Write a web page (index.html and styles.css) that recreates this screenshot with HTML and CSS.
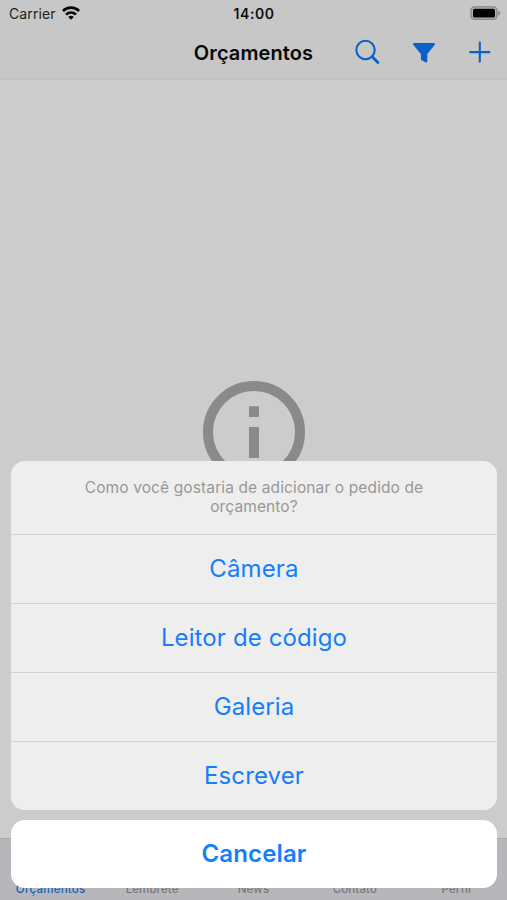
FILE: index.html
```
<!DOCTYPE html>
<html lang="pt-BR">
<head>
<meta charset="utf-8">
<title>Orçamentos</title>
<link rel="stylesheet" href="styles.css">
</head>
<body>
<div class="screen">
  <header class="top">
    <div class="status">
      <div class="carrier"><span>Carrier</span>
        <svg class="wifi" width="18" height="14" viewBox="0 0 18 14"><g fill="none" stroke="#080808" stroke-width="2.700"><path d="M.9 5C5.400 .5 12.600 .5 17.100 5"/><path d="M4 8.600C6.800 5.800 11.200 5.800 14 8.600"/></g><path fill="#080808" d="M6.200 10.900Q9 8.600 11.800 10.900L9 13.800Z"/></svg>
      </div>
      <time class="clock">14:00</time>
      <svg class="battery" width="31" height="14" viewBox="0 0 31 14"><rect x="1" y=".8" width="26" height="12.600" rx="3.600" fill="#b4b4b4" stroke="#858585" stroke-width="1.300"/><rect x="3" y="2.700" width="22" height="8.800" rx="1.600" fill="#000"/><path fill="#858585" d="M28.300 4.700Q30.300 5.500 30.300 7.100T28.300 9.500Z"/></svg>
    </div>
    <div class="nav">
      <h1 class="title">Orçamentos</h1>
      <div class="actions">
        <svg width="26" height="26" viewBox="0 0 26 26" fill="none" stroke="#0961c9" stroke-linecap="round"><circle cx="10.500" cy="11" r="9.200" stroke-width="2.100"/><path d="M17.200 17.700L22.900 23.500" stroke-width="2.800"/></svg>
        <svg width="26" height="26" viewBox="0 0 26 26"><path fill="#0961c9" d="M2.900 3.900H22.900Q24.500 4 24 5.600L16.300 15V22.200Q16.100 23.900 14.400 23.300L10.600 21.200Q9.900 20.700 9.900 19.800V15L2 5.600Q1.400 4.200 2.900 3.900Z"/></svg>
        <svg width="26" height="26" viewBox="0 0 26 26" stroke="#0961c9" stroke-width="2.100" stroke-linecap="round"><path d="M12.800 3.500V22.700M3.200 13.100H22.400"/></svg>
      </div>
    </div>
  </header>
  <main class="content">
    <svg class="info" width="104" height="104" viewBox="0 0 104 104"><circle cx="52" cy="52" r="46" fill="none" stroke="#8a8a8a" stroke-width="10"/><path fill="#8a8a8a" d="M47 26.300H57V37H47ZM47 47H57V78H47Z"/></svg>
  </main>
  <nav class="tabs">
    <span class="tab active">Orçamentos</span><span class="tab">Lembrete</span><span class="tab">News</span><span class="tab">Contato</span><span class="tab">Perfil</span>
  </nav>
  <div class="overlay">
    <section class="sheet">
      <p class="prompt">Como você gostaria de adicionar o pedido de orçamento?</p>
      <button class="option">Câmera</button>
      <button class="option">Leitor de código</button>
      <button class="option">Galeria</button>
      <button class="option">Escrever</button>
    </section>
    <button class="cancel">Cancelar</button>
  </div>
</div>
</body>
</html>
```
FILE: styles.css
```
* { box-sizing: border-box; }
body { margin: 0; font-family: Inter, "Liberation Sans", sans-serif; }
.screen { position: relative; display: flex; flex-direction: column; width: 507px; height: 900px; overflow: hidden; background: #ccc; }
.top { height: 80px; background: #c7c7c7; border-bottom: 2px solid #c1c1c1; }
.status { display: grid; grid-template-columns: 1fr auto 1fr; align-items: center; height: 27px; padding: 0 6px 0 9px; }
.carrier { display: flex; align-items: center; gap: 6px; font-size: 14px; letter-spacing: .1px; color: #222; }
.wifi { margin-top: -2px; }
.clock { margin-left: -2px; font-size: 14px; font-weight: 600; letter-spacing: .55px; color: #111; }
.battery { justify-self: end; margin-top: -1px; }
.nav { display: grid; grid-template-columns: 1fr auto 1fr; align-items: center; height: 50px; padding: 0 14px; }
.title { grid-column: 2; margin: 1px 0 0; font-size: 20px; line-height: 24px; font-weight: 600; letter-spacing: .1px; color: #090909; }
.actions { display: flex; justify-content: flex-end; gap: 30px; }
.content { flex: 1; display: flex; justify-content: center; padding-top: 300px; }
.tabs { display: grid; grid-template-columns: repeat(5, 1fr); align-items: end; height: 62px; padding: 0 0 4px; background: #b7b7bb; border-top: 1px solid #aaa; }
.tab { text-align: center; font-size: 11.500px; line-height: 14px; font-weight: 500; letter-spacing: .1px; color: #77777b; }
.active { color: #1262b8; letter-spacing: .25px; }
.overlay { position: absolute; inset: 0; display: flex; flex-direction: column; justify-content: flex-end; gap: 10px; padding: 0 10px 12.500px 11px; }
.sheet { overflow: hidden; border-radius: 14px; background: #eee; }
.prompt { height: 73px; margin: 0; padding: 17px 60px 0; text-align: center; font-size: 15.500px; line-height: 19.500px; letter-spacing: .12px; color: #989898; }
.option, .cancel { display: block; width: 100%; border: 0; font-family: inherit; font-size: 24px; color: #147efb; }
.option { height: 68.900px; padding: 0 0 1px; border-top: 1px solid #d2d2d2; background: #eee; letter-spacing: .12px; }
.cancel { height: 68px; padding: 0 0 1px; border-radius: 14px; background: #fff; font-weight: 600; letter-spacing: .15px; }
```
